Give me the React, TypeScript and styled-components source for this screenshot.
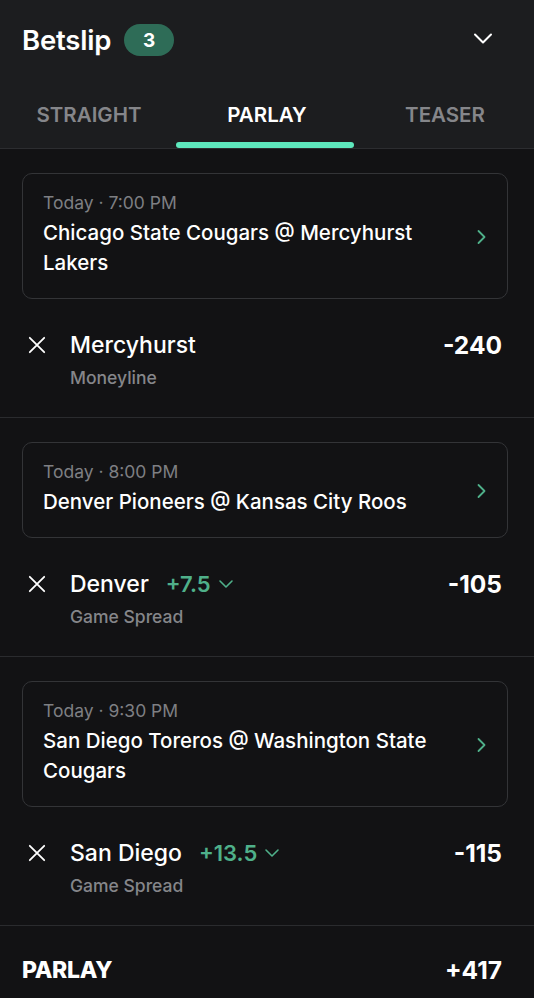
import styled, { createGlobalStyle } from "styled-components";

const GlobalStyle = createGlobalStyle`
  * { box-sizing: border-box; }
  body {
    margin: 0;
    background: #121214;
    font-family: Inter, "Noto Sans", sans-serif;
    color: #fff;
  }
`;

type Leg = {
  time: string;
  matchup: string;
  pick: string;
  line?: string;
  market: string;
  odds: string;
};

const legs: Leg[] = [
  {
    time: "Today · 7:00 PM",
    matchup: "Chicago State Cougars @ Mercyhurst Lakers",
    pick: "Mercyhurst",
    market: "Moneyline",
    odds: "-240",
  },
  {
    time: "Today · 8:00 PM",
    matchup: "Denver Pioneers @ Kansas City Roos",
    pick: "Denver",
    line: "+7.5",
    market: "Game Spread",
    odds: "-105",
  },
  {
    time: "Today · 9:30 PM",
    matchup: "San Diego Toreros @ Washington State Cougars",
    pick: "San Diego",
    line: "+13.5",
    market: "Game Spread",
    odds: "-115",
  },
];

const tabs = ["STRAIGHT", "PARLAY", "TEASER"];

export default function App() {
  return (
    <>
      <GlobalStyle />
      <Slip>
        <Header>
          <TopRow>
            <Title>Betslip</Title>
            <Badge>3</Badge>
            <Collapse>
              <svg width="20" height="12" viewBox="0 0 20 12" fill="none">
                <path d="M2 1.5l8 8 8-8" stroke="#fff" strokeWidth="2" strokeLinecap="round" strokeLinejoin="round" />
              </svg>
            </Collapse>
          </TopRow>
          <Tabs>
            {tabs.map((t) => (
              <Tab key={t} active={t === "PARLAY"}>
                {t}
              </Tab>
            ))}
          </Tabs>
        </Header>

        {legs.map((leg, i) => (
          <Section key={i}>
            <GameCard>
              <GameInfo>
                <GameTime>{leg.time}</GameTime>
                <Matchup>{leg.matchup}</Matchup>
              </GameInfo>
              <svg width="11" height="16" viewBox="0 0 11 16" fill="none">
                <path d="M2.5 2l6 6-6 6" stroke="#4fb08a" strokeWidth="1.8" strokeLinecap="round" strokeLinejoin="round" />
              </svg>
            </GameCard>
            <Selection>
              <Remove>
                <svg width="20" height="20" viewBox="0 0 20 20" fill="none">
                  <path d="M2 2l16 16M18 2L2 18" stroke="#fff" strokeWidth="2" strokeLinecap="round" />
                </svg>
              </Remove>
              <PickInfo>
                <PickLine>
                  <PickName>{leg.pick}</PickName>
                  {leg.line && (
                    <Spread>
                      {leg.line}
                      <svg width="16" height="10" viewBox="0 0 16 10" fill="none">
                        <path d="M2 2l6 6 6-6" stroke="#4fb08a" strokeWidth="1.6" strokeLinecap="round" strokeLinejoin="round" />
                      </svg>
                    </Spread>
                  )}
                </PickLine>
                <Market>{leg.market}</Market>
              </PickInfo>
              <Odds>{leg.odds}</Odds>
            </Selection>
          </Section>
        ))}

        <Footer>
          <FooterLabel>PARLAY</FooterLabel>
          <FooterOdds>+417</FooterOdds>
        </Footer>
      </Slip>
    </>
  );
}

const Slip = styled.div`
  width: 534px;
  min-height: 998px;
  background: #121214;
`;

const Header = styled.div`
  background: #1c1d1f;
  border-bottom: 1px solid #2c2d30;
`;

const TopRow = styled.div`
  display: flex;
  align-items: center;
  height: 80px;
  padding: 0 41px 0 22px;
`;

const Title = styled.h1`
  margin: 0;
  font-size: 27.5px;
  font-weight: 600;
  letter-spacing: -0.2px;
`;

const Badge = styled.span`
  margin-left: 13px;
  width: 50px;
  height: 32px;
  border-radius: 16px;
  background: #2e6c57;
  display: flex;
  align-items: center;
  justify-content: center;
  font-size: 19px;
  font-weight: 700;
`;

const Collapse = styled.div`
  margin-left: auto;
  display: flex;
  align-items: center;
  margin-top: -2px;
`;

const Tabs = styled.div`
  display: grid;
  grid-template-columns: repeat(3, 1fr);
  height: 68px;
`;

const Tab = styled.div<{ active?: boolean }>`
  position: relative;
  display: flex;
  align-items: center;
  justify-content: center;
  padding-top: 1px;
  font-size: 20.5px;
  font-weight: 600;
  color: ${(p) => (p.active ? "#fff" : "#85868a")};
  &::after {
    content: "";
    display: ${(p) => (p.active ? "block" : "none")};
    position: absolute;
    left: -2px;
    right: 2px;
    bottom: 0;
    height: 6px;
    border-radius: 3px;
    background: #5ee8bd;
  }
`;

const Section = styled.div`
  padding: 24px 26px 28px 22px;
  border-bottom: 1px solid #2a2b2e;
`;

const GameCard = styled.div`
  display: flex;
  align-items: center;
  gap: 16px;
  padding: 18px 20px 20px;
  border: 1px solid #333437;
  border-radius: 10px;
  svg {
    flex-shrink: 0;
    margin-top: 4px;
  }
`;

const GameInfo = styled.div`
  flex: 1;
  display: flex;
  flex-direction: column;
  gap: 4px;
`;

const GameTime = styled.div`
  font-size: 17.5px;
  line-height: 22px;
  color: #7e7f83;
`;

const Matchup = styled.div`
  font-size: 20.5px;
  line-height: 30px;
  font-weight: 500;
  color: #fff;
`;

const Selection = styled.div`
  display: flex;
  align-items: flex-start;
  margin-top: 32px;
  padding-right: 6px;
`;

const Remove = styled.div`
  width: 48px;
  height: 28px;
  display: flex;
  align-items: center;
  justify-content: center;
  margin-left: -9px;
  margin-right: 9px;
  svg {
    width: 18px;
    height: 18px;
  }
`;

const PickInfo = styled.div`
  flex: 1;
  display: flex;
  flex-direction: column;
  gap: 8px;
`;

const PickLine = styled.div`
  display: flex;
  align-items: center;
  gap: 17px;
  height: 28px;
`;

const PickName = styled.span`
  font-size: 23px;
  font-weight: 500;
`;

const Spread = styled.span`
  display: flex;
  align-items: center;
  gap: 7px;
  font-size: 22px;
  font-weight: 600;
  color: #4fb08a;
`;

const Market = styled.div`
  font-size: 17.5px;
  line-height: 22px;
  font-weight: 500;
  color: #85868a;
`;

const Odds = styled.div`
  font-size: 24.5px;
  line-height: 28px;
  font-weight: 700;
`;

const Footer = styled.div`
  display: flex;
  align-items: center;
  justify-content: space-between;
  padding: 29px 32px 30px 22px;
`;

const FooterLabel = styled.div`
  font-size: 23px;
  font-weight: 800;
  letter-spacing: -0.3px;
`;

const FooterOdds = styled.div`
  font-size: 24.5px;
  font-weight: 700;
`;
